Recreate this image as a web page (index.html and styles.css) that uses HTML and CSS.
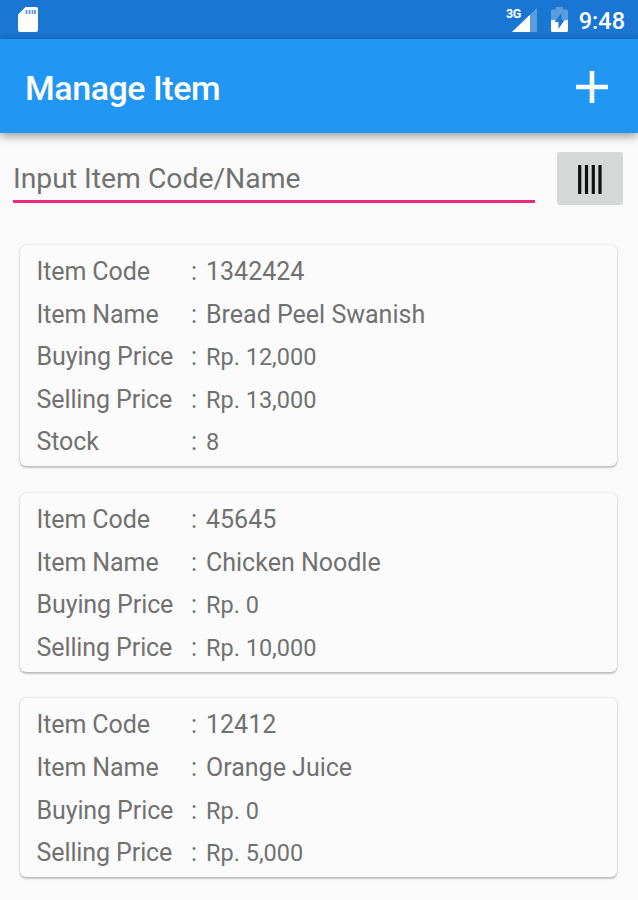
FILE: index.html
```html
<!DOCTYPE html>
<html lang="en">
<head>
    <meta charset="UTF-8">
    <meta name="viewport" content="width=device-width, initial-scale=1.0">
    <title>Manage Item</title>
    <link rel="stylesheet" href="styles.css">
</head>
<body>

<div class="statusbar">
    <svg class="sdcard" width="20" height="25" viewBox="0 0 20 25">
        <path d="M7.500 0H18a2 2 0 0 1 2 2V23a2 2 0 0 1-2 2H2a2 2 0 0 1-2-2V7.500z" fill="#fff"/>
        <path d="M8.500 3v4M11.500 3v4M14.500 3v4M17 3v4" stroke="#5f9bdc" stroke-width="1.800"/>
    </svg>
    <div class="status-icons">
        <span class="network">3G</span>
        <svg class="signal" width="25" height="24" viewBox="0 0 25 24">
            <path d="M25 0V24H0z" fill="#5c9de0"/>
            <path d="M18 6.700V24H0z" fill="#fff"/>
        </svg>
        <svg class="battery" width="17" height="25" viewBox="0 0 17 25">
            <path d="M5 0h7v2.500h3.500A1.500 1.500 0 0 1 17 4v9H0V4a1.500 1.500 0 0 1 1.500-1.500H5z" fill="#5c9de0"/>
            <path d="M0 13h17v10.500a1.500 1.500 0 0 1-1.500 1.500h-14A1.500 1.500 0 0 1 0 23.500z" fill="#fff"/>
            <path d="M10.500 6L3.500 15h4v7l6-9h-3z" fill="#1976d2"/>
        </svg>
        <span class="clock">9:48</span>
    </div>
</div>

<header>
    <h1>Manage Item</h1>
    <svg width="32" height="32" viewBox="0 0 32 32">
        <path d="M16 0V32M0 16H32" stroke="#fff" stroke-width="4.600"/>
    </svg>
</header>

<div class="search">
    <input type="text" placeholder="Input Item Code/Name">
    <button>
        <svg width="24" height="29" viewBox="0 0 24 29">
            <path d="M1.700 0V29M8.500 0V29M15.300 0V29M22 0V29" stroke="#111" stroke-width="3.200"/>
        </svg>
    </button>
</div>

<main>
    <div class="card">
        <div class="row"><span class="label">Item Code</span><span>:</span><span>1342424</span></div>
        <div class="row"><span class="label">Item Name</span><span>:</span><span>Bread Peel Swanish</span></div>
        <div class="row"><span class="label">Buying Price</span><span>:</span><span class="small">Rp. 12,000</span></div>
        <div class="row"><span class="label">Selling Price</span><span>:</span><span class="small">Rp. 13,000</span></div>
        <div class="row"><span class="label">Stock</span><span>:</span><span class="small">8</span></div>
    </div>
    <div class="card">
        <div class="row"><span class="label">Item Code</span><span>:</span><span>45645</span></div>
        <div class="row"><span class="label">Item Name</span><span>:</span><span>Chicken Noodle</span></div>
        <div class="row"><span class="label">Buying Price</span><span>:</span><span class="small">Rp. 0</span></div>
        <div class="row"><span class="label">Selling Price</span><span>:</span><span class="small">Rp. 10,000</span></div>
    </div>
    <div class="card">
        <div class="row"><span class="label">Item Code</span><span>:</span><span>12412</span></div>
        <div class="row"><span class="label">Item Name</span><span>:</span><span>Orange Juice</span></div>
        <div class="row"><span class="label">Buying Price</span><span>:</span><span class="small">Rp. 0</span></div>
        <div class="row"><span class="label">Selling Price</span><span>:</span><span class="small">Rp. 5,000</span></div>
    </div>
</main>

</body>
</html>
```
FILE: styles.css
```css
* {
    box-sizing: border-box;
}
body {
    font-family: Roboto, sans-serif;
    margin: 0;
    height: 900px;
    overflow: hidden;
    background-color: #fafafa;
    color: #717171;
}
svg {
    display: block;
}
.statusbar {
    display: flex;
    justify-content: space-between;
    height: 39px;
    padding: 7px 13px 0 18px;
    background-color: #1976d2;
    color: white;
}
.status-icons {
    display: flex;
}
.network {
    font-size: 12.5px;
    font-weight: 700;
    line-height: 14px;
    margin-right: -9px;
    letter-spacing: -0.5px;
}
.signal {
    margin-top: 1px;
}
.battery {
    margin-left: 14px;
}
.clock {
    font-size: 23.5px;
    font-weight: 500;
    line-height: 28px;
    margin-left: 11px;
}
header {
    display: flex;
    justify-content: space-between;
    align-items: center;
    height: 94px;
    padding: 1px 30px 0 25px;
    background-color: #2196f3;
    color: white;
    box-shadow: 0 3px 9px rgba(0, 0, 0, 0.4);
}
h1 {
    margin: 2px 0 0;
    font-size: 34px;
    font-weight: 500;
    line-height: 40px;
    letter-spacing: -0.45px;
}
.search {
    display: flex;
    justify-content: space-between;
    height: 111px;
    padding: 19px 15px 0 13px;
}
.search input {
    width: 522px;
    height: 51px;
    padding: 4px 0 0;
    border: none;
    border-bottom: 3px solid #ec2a7b;
    background: none;
    font-family: inherit;
    font-size: 28.3px;
    outline: none;
}
.search input::placeholder {
    color: #717171;
}
.search button {
    display: flex;
    justify-content: center;
    align-items: center;
    width: 66px;
    height: 53px;
    padding: 2px 0 0;
    border: none;
    border-radius: 3px;
    background-color: #d6d7d7;
}
main {
    display: flex;
    flex-direction: column;
    gap: 26.5px;
    padding: 1px 21px 0 20px;
}
.card {
    padding: 6px 17px 2.5px 16.5px;
    border-radius: 6px;
    background-color: #fbfbfb;
    box-shadow: 0 0 2px rgba(0, 0, 0, 0.22), 0 2px 2px rgba(0, 0, 0, 0.2);
}
.row {
    display: grid;
    grid-template-columns: 154.5px 15px auto;
    align-items: baseline;
    height: 42.6px;
    font-size: 25px;
    line-height: 42.6px;
}
.label {
    letter-spacing: -0.1px;
}
.small {
    font-size: 23.5px;
}
```
